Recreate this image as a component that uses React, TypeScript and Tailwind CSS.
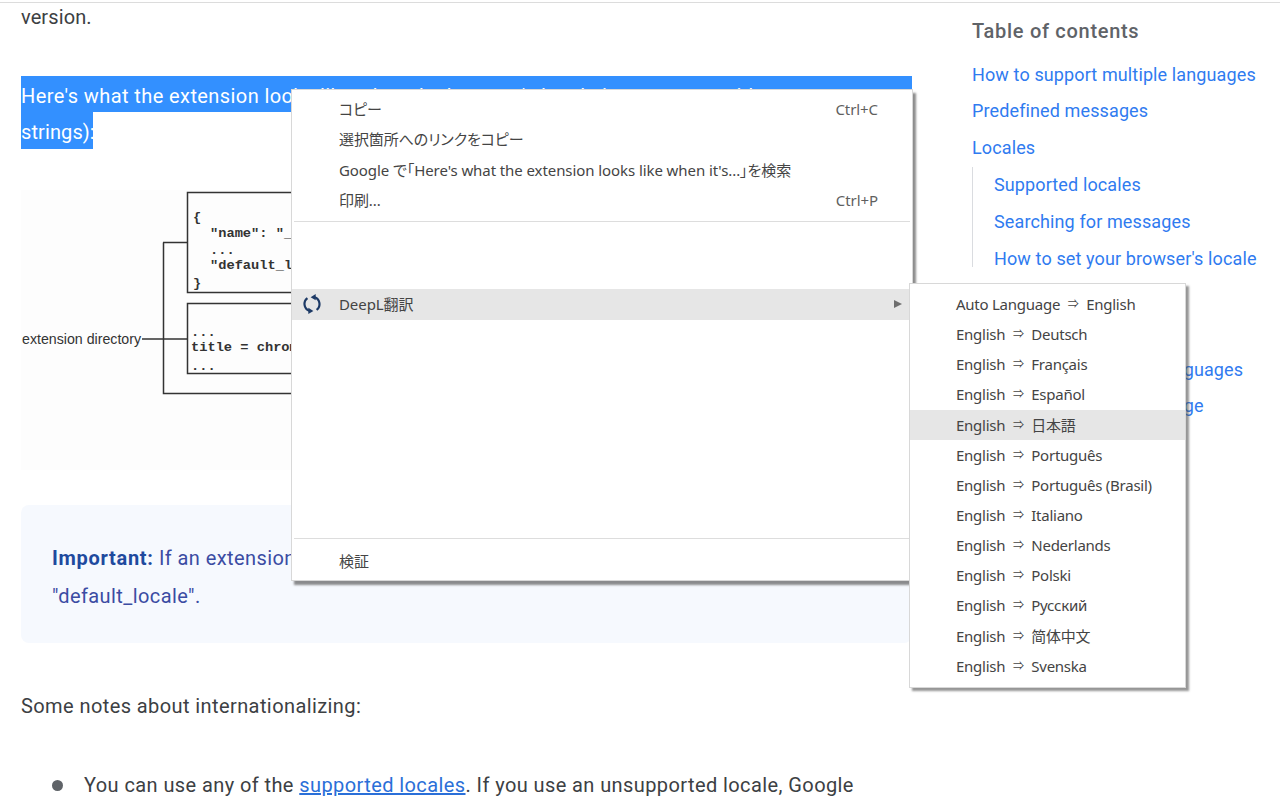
const topMenu = [
  { label: "コピー", shortcut: "Ctrl+C" },
  { label: "選択箇所へのリンクをコピー" },
  { label: "Google で「Here's what the extension looks like when it's...」を検索" },
  { label: "印刷...", shortcut: "Ctrl+P" },
];

const languages = [
  "Deutsch",
  "Français",
  "Español",
  "日本語",
  "Português",
  "Português (Brasil)",
  "Italiano",
  "Nederlands",
  "Polski",
  "Русский",
  "简体中文",
  "Svenska",
];

function DeepLIcon() {
  return (
    <svg viewBox="0 0 24 24" className="h-[22px] w-[22px] text-[#1d3a66]" fill="none" stroke="currentColor" strokeWidth="2.4">
      <path d="M17 18.5A8 8 0 0 0 15 4.6" />
      <path d="M7 5.5A8 8 0 0 0 9 19.4" />
      <polygon points="10.5,4.5 16,1 16,8" fill="currentColor" stroke="none" />
      <polygon points="13.5,19.5 8,16 8,23" fill="currentColor" stroke="none" />
    </svg>
  );
}

function Diagram() {
  return (
    <div className="mt-[41px] h-[280px] w-[891px] bg-[#fdfdfd] tracking-normal">
      <svg viewBox="0 0 891 280" className="h-full w-full" fill="none" stroke="#333333" strokeWidth="1.5">
        <path d="M121 149H166M142 52.500H166M142.500 52.500V203.500H700" />
        <rect x="166.500" y="2.500" width="500" height="100" />
        <rect x="166.500" y="113.500" width="500" height="70" />
        <g fill="#333" stroke="none" fontFamily="'Liberation Mono', monospace" fontSize="13.700" fontWeight="700">
          <text x="172" y="31">{"{"}</text>
          <text x="189" y="47">"name": "__MSG_extName__",</text>
          <text x="189" y="64">...</text>
          <text x="189" y="79">"default_locale": "en"</text>
          <text x="172" y="97">{"}"}</text>
          <text x="170" y="146">...</text>
          <text x="170" y="161">title = chrome.i18n.getMessage("extName");</text>
          <text x="170" y="180">...</text>
        </g>
        <text x="1" y="154" fill="#333" stroke="none" fontFamily="'Liberation Sans', Arial, sans-serif" fontSize="14.200">
          extension directory
        </text>
      </svg>
    </div>
  );
}

export default function App() {
  return (
    <div className="relative h-[800px] w-[1280px] overflow-hidden bg-white font-['Roboto',sans-serif] text-[20px] leading-[36.600px] tracking-[0.41px] text-[#3c4043]">
      <div className="mt-[2px] h-px bg-[#dcdcdc]" />
      <div className="flex">
        <main className="ml-[21px] w-[891px] shrink-0">
          <p className="mt-[-4px] tracking-[0.1px]">version.</p>

          <p className="mt-[40px] leading-[40px]">
            <span className="block h-[36.500px] whitespace-nowrap bg-[#3390ff] text-white">
              Here's what the extension looks like when the browser's locale is set to one with
            </span>
            <span className="block h-[36.500px] w-[72px] bg-[#3390ff] tracking-[0.1px] text-white">strings):</span>
          </p>

          <Diagram />

          <div className="mt-[35px] h-[138px] rounded-lg bg-[#f6f9fe] pl-[31px] pt-[34px] leading-[38.500px] text-[#3b4ca3]">
            <p className="whitespace-nowrap">
              <strong className="font-bold tracking-[0.7px] text-[#1f4a9e]">Important:</strong> If an extension has a _locales directory, the manifest must
              <br />
              "default_locale".
            </p>
          </div>

          <p className="mt-[45px]">Some notes about internationalizing:</p>

          <div className="mt-[43px] flex items-center">
            <span className="ml-[31px] mr-[21px] h-[11px] w-[11px] shrink-0 rounded-full bg-[#5f6368]" />
            <p className="whitespace-nowrap">
              You can use any of the <a className="text-[#2a6fd8] underline">supported locales</a>. If you use an unsupported locale, Google
            </p>
          </div>
        </main>

        <aside className="ml-[60px] whitespace-nowrap text-[18px] tracking-[0.12px] text-[#2f7bf0]">
          <h2 className="mb-[7px] mt-[10px] text-[20px] font-medium tracking-[0.7px] text-[#5f6368]">Table of contents</h2>
          <p>How to support multiple languages</p>
          <p>Predefined messages</p>
          <p>Locales</p>
          <div className="mt-[3px] h-[100px] border-l border-[#dadce0] pl-[21px]">
            <p className="-mt-[2px]">Supported locales</p>
            <p>Searching for messages</p>
            <p>How to set your browser's locale</p>
          </div>
          <div className="mt-[11px]">
            <p className="h-[36.600px]" />
            <p className="h-[36.600px]" />
            <p className="pl-[34px]">Getting the accept languages</p>
            <p className="pl-[42px]">Getting the UI language</p>
          </div>
        </aside>
      </div>

      {/* context menu */}
      <div className="absolute left-[291px] top-[89px] flex h-[492px] w-[622px] flex-col border border-[#d8d8d8] bg-white pt-[4px] font-['Noto_Sans','Noto_Sans_CJK_JP','Noto_Sans_CJK_SC',sans-serif] text-[15px] leading-[20px] tracking-[-0.08px] text-[#444444] shadow-[3px_4px_2px_rgba(80,80,80,0.65)] [font-feature-settings:'palt']">
        {topMenu.map((item) => (
          <div key={item.label} className="flex h-[30.300px] shrink-0 items-center justify-between pl-[47px] pr-[34px]">
            <span>{item.label}</span>
            {item.shortcut && <span className="text-[#5f5f5f]">{item.shortcut}</span>}
          </div>
        ))}
        <div className="mx-[2px] mt-[6px] h-px bg-[#dddddd]" />
        <div className="mt-[67px] flex h-[31px] items-center bg-[#e6e6e6] pr-[10px]">
          <span className="flex w-[47px] justify-center pr-[8px]">
            <DeepLIcon />
          </span>
          <span>DeepL翻訳</span>
          <span className="ml-auto h-0 w-0 border-y-[4.500px] border-l-[8px] border-y-transparent border-l-[#6e6e6e]" />
        </div>
        <div className="mx-[2px] mt-[218px] h-px bg-[#dddddd]" />
        <div className="flex h-[42px] items-center pl-[47px] pt-[3px]">検証</div>
      </div>

      {/* DeepL submenu */}
      <div className="absolute left-[909px] top-[283px] w-[277px] border border-[#d8d8d8] bg-white pb-[6px] pt-[5px] font-['Noto_Sans','Noto_Sans_CJK_JP','Noto_Sans_CJK_SC',sans-serif] text-[15px] leading-[20px] tracking-[-0.25px] text-[#444444] shadow-[3px_3px_2px_rgba(80,80,80,0.6)]">
        <div className="flex h-[30.150px] items-center pl-[46px]">
          <span>Auto Language</span>
          <span className="w-[26px] text-center text-[11px]">⇒</span>
          <span>English</span>
        </div>
        {languages.map((lang) => (
          <div key={lang} className={`flex h-[30.150px] items-center pl-[46px] ${lang === "日本語" ? "bg-[#e6e6e6]" : ""}`}>
            <span>English</span>
            <span className="w-[26px] text-center text-[11px]">⇒</span>
            <span>{lang}</span>
          </div>
        ))}
      </div>
    </div>
  );
}
